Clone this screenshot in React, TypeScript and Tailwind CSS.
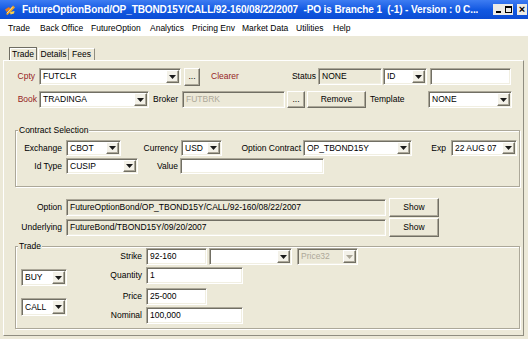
import React from 'react';

const sunken =
  'border border-t-[#aca899] border-l-[#aca899] border-b-white border-r-white shadow-[inset_1px_1px_0_#716f64,inset_-1px_-1px_0_#f1efe2]';
const raised =
  'border border-t-white border-l-white border-b-[#716f64] border-r-[#716f64] shadow-[inset_-1px_-1px_0_#aca899]';

interface FieldProps {
  w: string;
  h?: string;
  value?: string;
  disabled?: boolean;
  muted?: boolean;
}

function Field({ w, h = 'h-[17px]', value = '', disabled = false, muted = false }: FieldProps) {
  return (
    <div
      className={`${sunken} ${w} ${h} flex shrink-0 items-center overflow-hidden whitespace-nowrap pl-[3px] ${
        disabled ? 'bg-[#ece9d8]' : 'bg-white'
      } ${muted ? 'text-[#aca899]' : 'text-black'}`}
    >
      {value}
    </div>
  );
}

function Arrow({ muted }: { muted?: boolean }) {
  return (
    <svg viewBox="0 0 7 4" className="h-[4px] w-[7px]" aria-hidden="true">
      <polygon points="0,0 7,0 3.5,4" fill={muted ? '#aca899' : '#1a1a1a'} />
    </svg>
  );
}

function Combo({ w, h = 'h-[17px]', value = '', disabled = false }: FieldProps) {
  return (
    <div
      className={`${sunken} ${w} ${h} flex shrink-0 items-stretch ${
        disabled ? 'bg-[#ece9d8] text-[#aca899]' : 'bg-white text-black'
      }`}
    >
      <span className="flex flex-1 items-center overflow-hidden whitespace-nowrap pl-[3px]">{value}</span>
      <span className={`${raised} m-[1px] flex w-[13px] items-center justify-center bg-[#f3f1e8]`}>
        <Arrow muted={disabled} />
      </span>
    </div>
  );
}

function Btn({ w, h = 'h-[17px]', label }: { w: string; h?: string; label: string }) {
  return (
    <button
      type="button"
      className={`${raised} ${w} ${h} flex shrink-0 items-center justify-center bg-[#ece9d8] leading-none text-black`}
    >
      {label}
    </button>
  );
}

function Group({ title, className, children }: { title: string; className: string; children: React.ReactNode }) {
  return (
    <div
      className={`relative ml-[11px] w-[505px] border border-[#aca899] shadow-[inset_1px_1px_0_#fff,1px_1px_0_#fff] ${className}`}
    >
      <span className="absolute left-[2px] top-[-5px] bg-[#ece9d8] px-[1px] leading-[9px]">{title}</span>
      {children}
    </div>
  );
}

function TitleIcon() {
  return (
    <svg viewBox="0 0 12 12" className="h-[12px] w-[12px]" aria-hidden="true">
      <path d="M2 10 L9 1.5 L11 3.5 L3.5 11 Z" fill="#f3a51d" />
      <path d="M1 5.5 L5 3 L6.5 5 L2.5 8 Z" fill="#e8781a" />
      <path d="M6 8 L10.5 7 L10 9.5 L6.5 10.5 Z" fill="#fbd04a" />
      <path d="M3 9 L8.5 3" stroke="#fff3c4" strokeWidth="0.8" />
    </svg>
  );
}

const menu = [
  ['Trade', 'w-[32px]'],
  ['Back Office', 'w-[51px]'],
  ['FutureOption', 'w-[59px]'],
  ['Analytics', 'w-[42px]'],
  ['Pricing Env', 'w-[50px]'],
  ['Market Data', 'w-[54px]'],
  ['Utilities', 'w-[37px]'],
  ['Help', 'w-[30px]'],
];

export default function App() {
  return (
    <div className="h-[339px] w-[528px] overflow-hidden bg-[#ece9d8] font-['Liberation_Sans',Arial,sans-serif] text-[8.5px] leading-none text-black">
      {/* title bar */}
      <div className="flex h-[19px] items-center bg-gradient-to-b from-[#3d7cf2] via-[#1259e2] to-[#0b4cd4] text-white">
        <span className="ml-[4px] flex shrink-0">
          <TitleIcon />
        </span>
        <span className="ml-[6px] min-w-0 overflow-hidden whitespace-nowrap text-[10px] font-bold tracking-[-0.1px]">
          FutureOptionBond/OP_TBOND15Y/CALL/92-160/08/22/2007&nbsp; -PO is Branche 1&nbsp; (-1) - Version : 0 C...
        </span>
        <div className="ml-auto mr-[1px] flex shrink-0 items-center pl-[6px] text-black">
          <span className="flex h-[11px] w-[10px] items-end justify-center bg-[#ecebe6] pb-[2px]">
            <span className="h-[2px] w-[5px] bg-black" />
          </span>
          <span className="flex h-[11px] w-[10px] items-center justify-center bg-[#ecebe6]">
            <span className="h-[7px] w-[7px] border border-t-2 border-black" />
          </span>
          <span className="ml-[4px] flex h-[11px] w-[10px] items-center justify-center bg-[#ecebe6] text-[11px] font-bold">
            ×
          </span>
        </div>
      </div>

      {/* menu bar */}
      <div className="flex h-[17px] items-center bg-white pl-[8px] pt-[2px]">
        {menu.map(([label, w]) => (
          <span key={label} className={`${w} whitespace-nowrap`}>
            {label}
          </span>
        ))}
      </div>

      <div className="pl-[3px] pr-[4px] pt-[11px]">
        {/* tabs */}
        <div className="flex h-[13px] items-end pl-[6px]">
          <div className="flex h-[13px] w-[28px] items-center justify-center border border-b-0 border-[#6f6d62] bg-[#ece9d8] shadow-[inset_1px_1px_0_#fff]">
            Trade
          </div>
          <div className="ml-[1px] flex h-[12px] w-[31px] items-center justify-center border-l border-r border-t border-l-white border-r-[#8f8d80] border-t-white">
            Details
          </div>
          <div className="flex h-[12px] w-[26px] items-center justify-center border-r border-t border-r-[#8f8d80] border-t-white">
            Fees
          </div>
        </div>

        {/* tab panel */}
        <div className="h-[276px] border border-b-[#8f8d80] border-l-white border-r-[#8f8d80] border-t-white pt-[7px]">
          {/* row 1 */}
          <div className="flex h-[17px] items-center">
            <span className="w-[35px] pr-[4px] text-right text-[#952424]">Cpty</span>
            <Combo w="w-[142px]" value="FUTCLR" />
            <span className="ml-[3px]">
              <Btn w="w-[16px]" h="h-[18px]" label="..." />
            </span>
            <span className="ml-[11px] w-[74px] text-[#952424]">Clearer</span>
            <span className="w-[33px] pr-[2px] text-right">Status</span>
            <Field w="w-[64px]" value="NONE" disabled />
            <span className="ml-[1px]">
              <Combo w="w-[44px]" value="ID" />
            </span>
            <span className="ml-[3px]">
              <Field w="w-[81px]" />
            </span>
          </div>

          {/* row 2 */}
          <div className="mt-[6px] flex h-[17px] items-center">
            <span className="w-[35px] pr-[2px] text-right text-[#952424]">Book</span>
            <Combo w="w-[110px]" value="TRADINGA" />
            <span className="w-[33px] pl-[4px]">Broker</span>
            <Field w="w-[103px]" value="FUTBRK" disabled muted />
            <span className="ml-[2px]">
              <Btn w="w-[18px]" label="..." />
            </span>
            <span className="ml-[2px]">
              <Btn w="w-[59px]" label="Remove" />
            </span>
            <span className="w-[62px] pl-[4px]">Template</span>
            <Combo w="w-[84px]" value="NONE" />
          </div>

          {/* contract selection */}
          <Group title="Contract Selection" className="mt-[22px] pb-[12px] pt-[9px]">
            <div className="flex h-[16px] items-center">
              <span className="w-[50px] pr-[4px] text-right">Exchange</span>
              <Combo w="w-[55px]" h="h-[16px]" value="CBOT" />
              <span className="w-[60px] pr-[3px] text-right">Currency</span>
              <Combo w="w-[41px]" h="h-[16px]" value="USD" />
              <span className="w-[81px] pr-[2px] text-right">Option Contract</span>
              <Combo w="w-[109px]" h="h-[16px]" value="OP_TBOND15Y" />
              <span className="w-[39px] pr-[5px] text-right">Exp</span>
              <Combo w="w-[66px]" h="h-[16px]" value="22 AUG 07" />
            </div>
            <div className="mt-[2px] flex h-[16px] items-center">
              <span className="w-[50px] pr-[4px] text-right">Id Type</span>
              <Combo w="w-[72px]" h="h-[16px]" value="CUSIP" />
              <span className="w-[42px] pr-[2px] text-right">Value</span>
              <Field w="w-[144px]" h="h-[16px]" />
            </div>
          </Group>

          {/* option / underlying */}
          <div className="mt-[11px] flex h-[19px] items-center">
            <span className="w-[62px] pr-[4px] text-right">Option</span>
            <Field w="w-[320px]" value="FutureOptionBond/OP_TBOND15Y/CALL/92-160/08/22/2007" disabled />
            <span className="ml-[3px]">
              <Btn w="w-[50px]" h="h-[19px]" label="Show" />
            </span>
          </div>
          <div className="mt-[1px] flex h-[19px] items-center">
            <span className="w-[62px] pr-[4px] text-right">Underlying</span>
            <Field w="w-[320px]" value="FutureBond/TBOND15Y/09/20/2007" disabled />
            <span className="ml-[3px]">
              <Btn w="w-[50px]" h="h-[19px]" label="Show" />
            </span>
          </div>

          {/* trade group */}
          <Group title="Trade" className="mt-[9px] pb-[4px] pt-[1px]">
            <div className="flex">
              <div className="flex w-[51px] flex-col pl-[5px] pt-[21px]">
                <Combo w="w-[46px]" value="BUY" />
                <span className="mt-[12px]">
                  <Combo w="w-[46px]" h="h-[18px]" value="CALL" />
                </span>
              </div>
              <div className="flex flex-col">
                <div className="flex h-[17px] items-center">
                  <span className="w-[79px] pr-[4px] text-right">Strike</span>
                  <Field w="w-[61px]" value="92-160" />
                  <span className="ml-[2px]">
                    <Combo w="w-[83px]" />
                  </span>
                  <span className="ml-[5px]">
                    <Combo w="w-[61px]" value="Price32" disabled />
                  </span>
                </div>
                <div className="mt-[2px] flex h-[17px] items-center">
                  <span className="w-[79px] pr-[4px] text-right">Quantity</span>
                  <Field w="w-[97px]" value="1" />
                </div>
                <div className="mt-[4px] flex h-[17px] items-center">
                  <span className="w-[79px] pr-[4px] text-right">Price</span>
                  <Field w="w-[61px]" value="25-000" />
                </div>
                <div className="mt-[2px] flex h-[17px] items-center">
                  <span className="w-[79px] pr-[4px] text-right">Nominal</span>
                  <Field w="w-[97px]" value="100,000" />
                </div>
              </div>
            </div>
          </Group>
        </div>
      </div>
    </div>
  );
}
